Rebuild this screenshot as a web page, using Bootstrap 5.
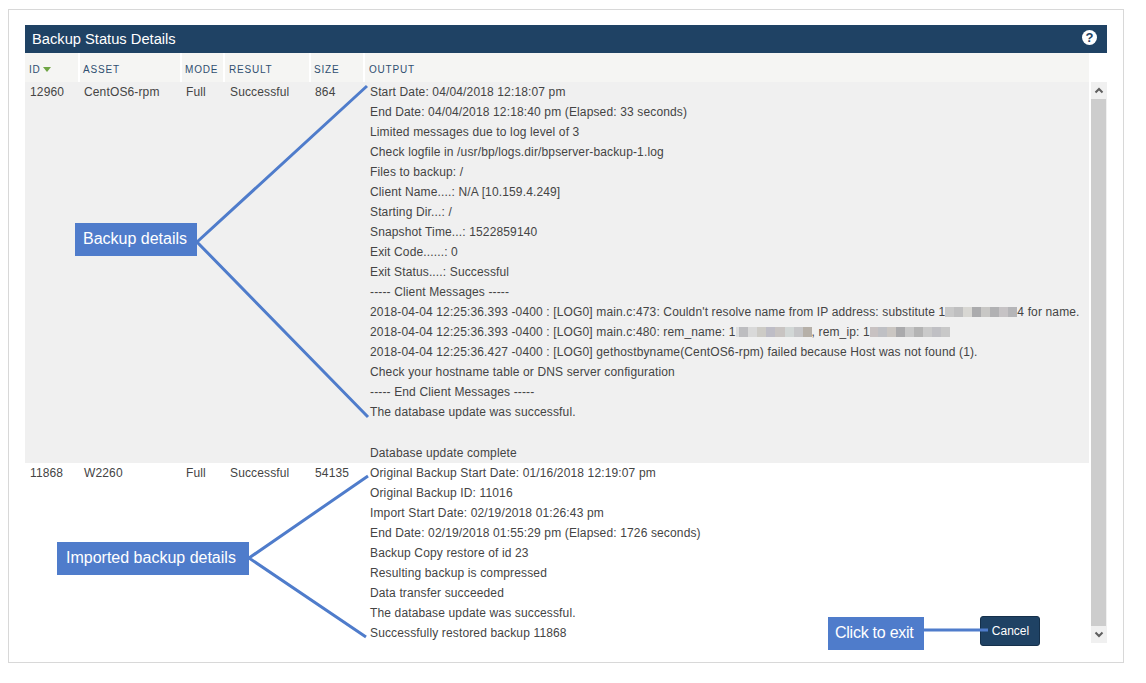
<!DOCTYPE html>
<html lang="en">
<head>
<meta charset="utf-8">
<title>Backup Status Details</title>
<link href="https://cdn.jsdelivr.net/npm/bootstrap@5.3.0/dist/css/bootstrap.min.css" rel="stylesheet">
<style>
html, body { height: 683px; overflow: hidden; background: #fff; }
body { font-family: "Liberation Sans", Arial, sans-serif; font-size: 12px; color: #444; padding: 9px 22px 20px 8px; }
.outer-frame { position: relative; height: 654px; border: 1px solid #d8d8d8; padding: 15px 16px 0 16px; background: #fff; }
.title-bar { height: 28px; background: #1f4264; color: #fff; font-size: 14.7px; padding: 0 10px 0 7px; }
.help-dot { width: 15px; height: 15px; margin-bottom: 3px; border-radius: 50%; background: #fff; color: #1f4264; font-weight: 700; font-size: 13px; line-height: 15px; text-align: center; }
.grid-wrap { width: 1064px; }
.status-table { table-layout: fixed; width: 1064px; border-collapse: collapse; margin: 0; }
.status-table th { height: 29px; background: #f5f5f3; border-right: 2px solid #fff; padding: 3px 0 0 4px; font-size: 10px; font-weight: 400; letter-spacing: .8px; color: #2f4f70; vertical-align: middle; text-transform: uppercase; }
.status-table th.head-tight { padding-left: 3px; }
.status-table th:last-child { border-right: 1px solid #fff; }
.status-table td { padding: 0 0 0 5px; line-height: 20px; vertical-align: top; color: #444; font-size: 12px; letter-spacing: .14px; background: transparent; }
.status-table td.pad-six { padding-left: 6px; }
.status-table tr.shaded td { background: #f0f0f0; }
.sort-tri { display: inline-block; width: 0; height: 0; margin-left: 2px; border-left: 4px solid transparent; border-right: 4px solid transparent; border-top: 5px solid #6fa544; vertical-align: 1px; }
.out-line { height: 20px; white-space: nowrap; }
.out-line.spacer-line { height: 21px; }
.blur-a, .blur-b, .blur-c { display: inline-block; height: 10px; vertical-align: -1px; }
.blur-a { width: 72px; background: linear-gradient(90deg,#c9c9c9 0 9px,#bfbfc0 9px 18px,#d8d7d3 18px 27px,#ababad 27px 36px,#c8c7c5 36px 45px,#b1b1b3 45px 54px,#c6c3c5 54px 63px,#b5b5b8 63px 72px); }
.blur-b { width: 76px; background: linear-gradient(90deg,#dedede 0 3px,#bdbdc0 3px 12px,#d9d9d9 12px 21px,#cdcbc6 21px 30px,#bebdc6 30px 39px,#c8c4c2 39px 49px,#d2d7d6 49px 58px,#c6c6c8 58px 67px,#b6b0a8 67px 76px); }
.blur-c { width: 80px; background: linear-gradient(90deg,#c8c2c2 0 8px,#bfc0c4 8px 17px,#cac6c2 17px 26px,#aaaaac 26px 35px,#c8c8c8 35px 44px,#b4b4b4 44px 53px,#cacaca 53px 62px,#c0c0c4 62px 71px,#c8c8c8 71px 80px); }
.track { width: 16px; height: 561px; margin: 29px 0 0 2px; background: #f0f0f0; }
.track-btn { height: 17px; }
.track-thumb { width: 15px; flex-grow: 1; background: #cdcdcd; }
.note-layer { position: absolute; left: -9px; top: -10px; width: 1146px; height: 683px; pointer-events: none; }
.note-tag { position: absolute; background: #4f7ccb; color: #fff; font-size: 16px; height: 33px; line-height: 31px; white-space: nowrap; }
.tag-one { left: 66px; top: 213px; width: 122px; padding-left: 8px; }
.tag-two { left: 48px; top: 532px; width: 192px; padding-left: 9px; }
.tag-three { left: 819px; top: 607px; width: 96px; padding-left: 7px; letter-spacing: -.25px; }
.cancel-btn { position: absolute; left: 971px; top: 606px; width: 60px; height: 30px; padding: 0 0 0 1px; background: #1f4264; border: 1px solid #15304b; border-radius: 3px; color: #fff; font-size: 12px; line-height: 26px; }
.cancel-btn:hover { background: #1f4264; color: #fff; border-color: #15304b; }
</style>
</head>
<body>
<div class="outer-frame">
  <div class="title-bar d-flex align-items-center justify-content-between">
    <span>Backup Status Details</span>
    <span class="help-dot">?</span>
  </div>
  <div class="d-flex">
    <div class="grid-wrap">
      <table class="status-table">
        <colgroup><col style="width:54px"><col style="width:102px"><col style="width:43px"><col style="width:86px"><col style="width:54px"><col style="width:725px"></colgroup>
        <thead>
          <tr><th>ID<span class="sort-tri"></span></th><th class="head-tight">Asset</th><th class="head-tight">Mode</th><th>Result</th><th class="head-tight">Size</th><th>Output</th></tr>
        </thead>
        <tbody>
          <tr class="shaded">
            <td>12960</td><td>CentOS6-rpm</td><td>Full</td><td class="pad-six">Successful</td><td>864</td>
            <td class="pad-six">
              <div class="out-line">Start Date: 04/04/2018 12:18:07 pm</div>
              <div class="out-line">End Date: 04/04/2018 12:18:40 pm (Elapsed: 33 seconds)</div>
              <div class="out-line">Limited messages due to log level of 3</div>
              <div class="out-line">Check logfile in /usr/bp/logs.dir/bpserver-backup-1.log</div>
              <div class="out-line">Files to backup: /</div>
              <div class="out-line">Client Name....: N/A [10.159.4.249]</div>
              <div class="out-line">Starting Dir...: /</div>
              <div class="out-line">Snapshot Time...: 1522859140</div>
              <div class="out-line">Exit Code......: 0</div>
              <div class="out-line">Exit Status....: Successful</div>
              <div class="out-line">----- Client Messages -----</div>
              <div class="out-line">2018-04-04 12:25:36.393 -0400 : [LOG0] main.c:473: Couldn't resolve name from IP address: substitute 1<span class="blur-a"></span>4 for name.</div>
              <div class="out-line">2018-04-04 12:25:36.393 -0400 : [LOG0] main.c:480: rem_name: 1<span class="blur-b"></span>, rem_ip: 1<span class="blur-c"></span></div>
              <div class="out-line">2018-04-04 12:25:36.427 -0400 : [LOG0] gethostbyname(CentOS6-rpm) failed because Host was not found (1).</div>
              <div class="out-line">Check your hostname table or DNS server configuration</div>
              <div class="out-line">----- End Client Messages -----</div>
              <div class="out-line">The database update was successful.</div>
              <div class="out-line spacer-line"></div>
              <div class="out-line">Database update complete</div>
            </td>
          </tr>
          <tr>
            <td>11868</td><td>W2260</td><td>Full</td><td class="pad-six">Successful</td><td>54135</td>
            <td class="pad-six">
              <div class="out-line">Original Backup Start Date: 01/16/2018 12:19:07 pm</div>
              <div class="out-line">Original Backup ID: 11016</div>
              <div class="out-line">Import Start Date: 02/19/2018 01:26:43 pm</div>
              <div class="out-line">End Date: 02/19/2018 01:55:29 pm (Elapsed: 1726 seconds)</div>
              <div class="out-line">Backup Copy restore of id 23</div>
              <div class="out-line">Resulting backup is compressed</div>
              <div class="out-line">Data transfer succeeded</div>
              <div class="out-line">The database update was successful.</div>
              <div class="out-line">Successfully restored backup 11868</div>
            </td>
          </tr>
        </tbody>
      </table>
    </div>
    <div class="track d-flex flex-column">
      <div class="track-btn d-flex align-items-center justify-content-center">
        <svg width="10" height="7" viewBox="0 0 10 7"><path d="M1.5 5.5 5 2l3.5 3.5" fill="none" stroke="#5f5f5f" stroke-width="2"/></svg>
      </div>
      <div class="track-thumb"></div>
      <div class="track-btn d-flex align-items-center justify-content-center">
        <svg width="10" height="7" viewBox="0 0 10 7"><path d="M1.5 1.5 5 5l3.5-3.5" fill="none" stroke="#5f5f5f" stroke-width="2"/></svg>
      </div>
    </div>
  </div>
  <button type="button" class="btn cancel-btn">Cancel</button>
  <svg class="note-layer" viewBox="0 0 1146 683">
    <g fill="none" stroke="#4f7ccb" stroke-width="3">
      <path d="M367 86 197 242 368 417"/>
      <path d="M368 476 249 558 366 637"/>
      <path d="M924 630H988"/>
    </g>
  </svg>
  <div class="note-tag tag-one">Backup details</div>
  <div class="note-tag tag-two">Imported backup details</div>
  <div class="note-tag tag-three">Click to exit</div>
</div>
</body>
</html>
